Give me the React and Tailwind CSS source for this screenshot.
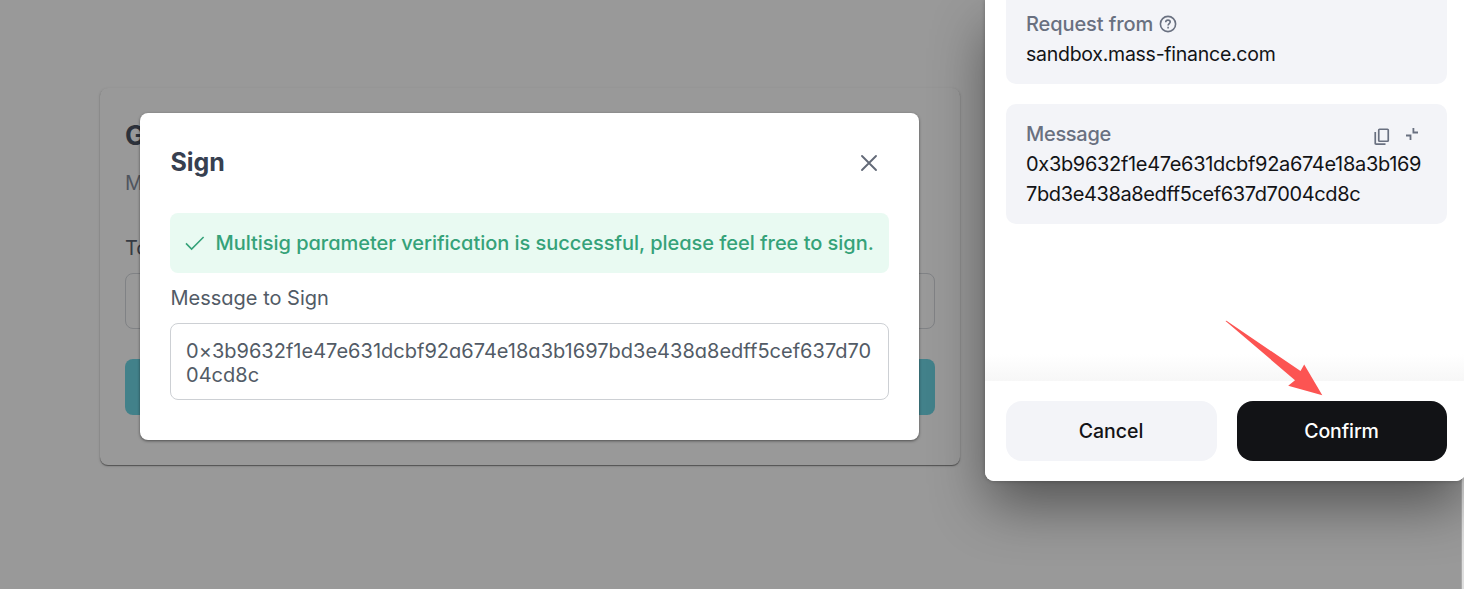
import React from "react";

function CheckIcon() {
  return (
    <svg width="20" height="20" viewBox="0 0 20 20" fill="none" stroke="#35a279" strokeWidth="1.6">
      <path d="M1 10.4 6.6 16 18.6 4" />
    </svg>
  );
}

function CloseIcon() {
  return (
    <svg width="20" height="20" viewBox="0 0 20 20" fill="none" stroke="#636a78" strokeWidth="1.9" strokeLinecap="round">
      <path d="M3 3 17 17M17 3 3 17" />
    </svg>
  );
}

function HelpIcon() {
  return (
    <svg width="18" height="18" viewBox="0 0 18 18" fill="none" stroke="#697080" strokeWidth="1.6">
      <circle cx="9" cy="9" r="7.6" />
      <path d="M6.7 7.3c0-1.4 1-2.2 2.3-2.2s2.2.8 2.2 1.9c0 1.5-2.1 1.6-2.1 3.4" />
      <path d="M9.1 11.8v1.6" />
    </svg>
  );
}

function CopyIcon() {
  return (
    <svg width="16" height="18" viewBox="0 0 16 18" fill="none" stroke="#697080" strokeWidth="1.7">
      <rect x="4.75" y="1.25" width="9.5" height="12" rx="0.8" />
      <path d="M1.25 4v11.4a.8.8 0 0 0 .8.8H11.5" />
    </svg>
  );
}

function CollapseIcon() {
  return (
    <svg width="12" height="12" viewBox="0 0 12 12" fill="none" stroke="#697080" strokeWidth="1.8">
      <path d="M7.4 0v4.5H12M0 7.5h4.5V12" />
    </svg>
  );
}

function PageCard() {
  return (
    <section className="flex h-[377px] w-[860px] flex-col rounded-lg px-[25px] shadow-[0_1px_1px_rgba(0,0,0,0.4),0_1px_3px_rgba(0,0,0,0.15)]">
      <h1 className="mt-[30px] text-[27px] leading-9 font-bold text-[#2c313b]">G</h1>
      <p className="mt-[14px] text-[20px] leading-[30px] text-[#50555e]">M</p>
      <label className="mt-[35px] text-[20px] leading-[30px] text-[#363b43]">To</label>
      <div className="mt-[10px] h-14 shrink-0 rounded-lg border border-[#808285]" />
      <div className="mt-[30px] h-14 shrink-0 rounded-lg bg-[#42818a]" />
    </section>
  );
}

function SignDialog() {
  return (
    <div className="absolute top-[113px] left-[140px] flex h-[327px] w-[779px] flex-col rounded-lg bg-white px-[30px] shadow-[0_1px_3px_rgba(0,0,0,0.5)]">
      <header className="mt-[29px] flex h-10 items-center justify-between">
        <h2 className="ml-[0.5px] text-[25px] leading-10 font-bold tracking-[-0.1px] text-[#374050]">Sign</h2>
        <button className="mt-[2px] mr-[10px]"><CloseIcon /></button>
      </header>
      <div className="mt-[31px] flex h-[60px] items-center gap-[10.5px] rounded-lg bg-[#e9faf2] pl-[15px] whitespace-nowrap text-[#35a279]">
        <CheckIcon />
        <span className="text-[20px] font-medium tracking-[-0.035px]">Multisig parameter verification is successful, please feel free to sign.</span>
      </div>
      <label className="mt-[10px] ml-[0.5px] text-[20px] leading-[30px] text-[#525b66]">Message to Sign</label>
      <div className="mt-[10px] h-[77px] rounded-lg border border-[#cdd0d4] px-[15px] pt-[15px] text-[20px] leading-6 tracking-[0.015px] whitespace-nowrap text-[#525b66]">
        <div>0×3b9632f1e47e631dcbf92a674e18a3b1697bd3e438a8edff5cef637d70</div>
        <div>04cd8c</div>
      </div>
    </div>
  );
}

function WalletWindow() {
  return (
    <aside className="absolute top-0 left-[985px] flex h-[481px] w-[480px] flex-col rounded-b-[9px] bg-white font-['Inter','Liberation_Sans',sans-serif] text-[20px] text-[#121316] shadow-[0_26px_56px_-3px_rgba(0,0,0,0.46),0_0_4px_rgba(0,0,0,0.25)] [font-feature-settings:'calt'_0]">
      <div className="flex h-[381px] flex-col gap-5 bg-linear-to-b from-white from-93% to-[#f7f7f7] px-[21px]">
        <section className="h-[84px] w-[441px] rounded-b-[10px] bg-[#f3f4f8] px-5 pt-[9px] leading-[30px]">
          <div className="flex items-center gap-[6px] font-medium text-[#697080]">
            <span className="tracking-[-0.1px]">Request from</span>
            <HelpIcon />
          </div>
          <div className="text-[19.5px] tracking-[-0.26px]">sandbox.mass-finance.com</div>
        </section>
        <section className="h-[120px] w-[441px] rounded-[10px] bg-[#f3f4f8] px-5 pt-[15px] leading-[30px]">
          <div className="flex h-[30px] items-center justify-between text-[#697080]">
            <span className="font-medium tracking-[-0.3px]">Message</span>
            <span className="mr-[9px] flex items-center gap-4">
              <span className="mt-[5px]"><CopyIcon /></span>
              <CollapseIcon />
            </span>
          </div>
          <div className="whitespace-nowrap">
            <div className="tracking-[-0.32px]">0x3b9632f1e47e631dcbf92a674e18a3b169</div>
            <div className="tracking-[-0.38px]">7bd3e438a8edff5cef637d7004cd8c</div>
          </div>
        </section>
      </div>
      <footer className="flex gap-5 rounded-b-[9px] bg-white pt-5 pb-5 pl-[21px] font-medium">
        <button className="h-[60px] w-[211px] shrink-0 rounded-[16px] bg-[#f3f4f8] pt-[2px] pr-px text-[19.5px]">Cancel</button>
        <button className="h-[60px] w-[210px] shrink-0 rounded-[16px] bg-[#121316] pt-[2px] pr-px text-[19.5px] tracking-[-0.1px] text-white">Confirm</button>
      </footer>
      <svg className="absolute top-[320px] left-[240px]" width="98" height="76" viewBox="0 0 98 76">
        <path d="M0.5 1 1.5 .8 75.5 51 79.2 44.5 97.3 75.2 63.2 65.7 70 60.2Z" fill="#fc5452" />
      </svg>
    </aside>
  );
}

export default function App() {
  return (
    <main className="relative h-[589px] w-[1464px] overflow-hidden bg-[#999999] font-['Inter','Liberation_Sans',sans-serif] [font-feature-settings:'cv11']">
      <div className="flex h-full justify-between">
        <div className="pt-[88px] pl-[100px]"><PageCard /></div>
        <div className="w-[3px] border-l border-[#aaa] bg-[#dedede]" />
      </div>
      <SignDialog />
      <WalletWindow />
    </main>
  );
}
